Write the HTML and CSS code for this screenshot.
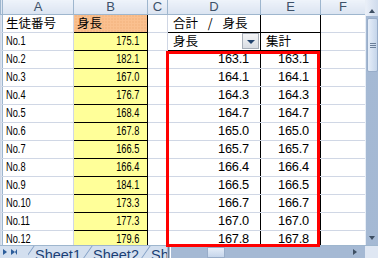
FILE: index.html
```html
<!DOCTYPE html>
<html lang="ja">
  <head>
    <meta charset="UTF-8" />
    <title>Excel pivot</title>
    <link rel="stylesheet" href="styles.css">
  </head>
  <body>
    <div class="window">
      <div class="main">
        <div class="sheet">
          <table class="grid">
            <colgroup>
              <col class="c-stub"><col class="c-a"><col class="c-b"><col class="c-c"><col class="c-d"><col class="c-e"><col class="c-f">
            </colgroup>
            <tr class="colhead">
              <th></th><th>A</th><th>B</th><th>C</th><th>D</th><th>E</th><th>F</th>
            </tr>
            <tr>
              <td class="stub"></td><td class="jp">生徒番号</td><td class="hb jp">身長</td><td></td>
              <td class="jp pv pv-title">合計 / 身長</td><td class="pv pv-title pv-r"></td><td></td>
            </tr>
            <tr>
              <td class="stub"></td><td class="no"><span>No.1</span></td><td class="yb num"><span>175.1</span></td><td></td>
              <td class="jp pv pv-head"><div class="fld">身長<i class="drop"></i></div></td><td class="jp pv pv-head pv-r">集計</td><td></td>
            </tr>
            <tr><td class="stub"></td><td class="no"><span>No.2</span></td><td class="yb num"><span>182.1</span></td><td></td><td class="pv val">163.1</td><td class="pv val pv-r">163.1</td><td></td></tr>
            <tr><td class="stub"></td><td class="no"><span>No.3</span></td><td class="yb num"><span>167.0</span></td><td></td><td class="pv val">164.1</td><td class="pv val pv-r">164.1</td><td></td></tr>
            <tr><td class="stub"></td><td class="no"><span>No.4</span></td><td class="yb num"><span>176.7</span></td><td></td><td class="pv val">164.3</td><td class="pv val pv-r">164.3</td><td></td></tr>
            <tr><td class="stub"></td><td class="no"><span>No.5</span></td><td class="yb num"><span>168.4</span></td><td></td><td class="pv val">164.7</td><td class="pv val pv-r">164.7</td><td></td></tr>
            <tr><td class="stub"></td><td class="no"><span>No.6</span></td><td class="yb num"><span>167.8</span></td><td></td><td class="pv val">165.0</td><td class="pv val pv-r">165.0</td><td></td></tr>
            <tr><td class="stub"></td><td class="no"><span>No.7</span></td><td class="yb num"><span>166.5</span></td><td></td><td class="pv val">165.7</td><td class="pv val pv-r">165.7</td><td></td></tr>
            <tr><td class="stub"></td><td class="no"><span>No.8</span></td><td class="yb num"><span>166.4</span></td><td></td><td class="pv val">166.4</td><td class="pv val pv-r">166.4</td><td></td></tr>
            <tr><td class="stub"></td><td class="no"><span>No.9</span></td><td class="yb num"><span>184.1</span></td><td></td><td class="pv val">166.5</td><td class="pv val pv-r">166.5</td><td></td></tr>
            <tr><td class="stub"></td><td class="no"><span>No.10</span></td><td class="yb num"><span>173.3</span></td><td></td><td class="pv val">166.7</td><td class="pv val pv-r">166.7</td><td></td></tr>
            <tr><td class="stub"></td><td class="no"><span>No.11</span></td><td class="yb num"><span>177.3</span></td><td></td><td class="pv val">167.0</td><td class="pv val pv-r">167.0</td><td></td></tr>
            <tr><td class="stub"></td><td class="no"><span>No.12</span></td><td class="yb num"><span>179.6</span></td><td></td><td class="pv val">167.8</td><td class="pv val pv-r">167.8</td><td></td></tr>
          </table>
        </div>
        <div class="vscroll">
          <div class="arrow up"></div>
          <div class="thumb"><span class="grip"></span></div>
          <div class="track"></div>
          <div class="arrow down"></div>
        </div>
      </div>

      <!-- sheet tabs + horizontal scroll -->
      <div class="tabbar">
        <div class="nav"><i class="tri"></i><i class="tri end"></i></div>
        <div class="tabs">
          <span class="tab">Sheet1</span>
          <span class="tab">Sheet2</span>
          <span class="tab">Sheet3</span>
        </div>
        <div class="hscroll">
          <span class="split"></span>
          <span class="hthumb"></span>
          <span class="htrack"></span>
          <i class="harrow"></i>
        </div>
        <div class="corner"></div>
      </div>

      <!-- red highlight over pivot values -->
      <div class="mark"></div>
    </div>
  </body>
</html>
```

FILE: styles.css
```css
*,
*::after,
*::before {
  padding: 0;
  margin: 0;
  box-sizing: border-box;
}
:root {
  --grid: #d0d7e5;
  --row-h: 18px;
}
html,
body {
  width: 378px;
  height: 258px;
  overflow: hidden;
  background: #fff;
}
.window {
  position: relative;
  width: 378px;
  height: 258px;
  display: flex;
  flex-direction: column;
  overflow: hidden;
  font-family: "Liberation Sans", "Noto Sans CJK JP", sans-serif;
  font-size: 12px;
  color: #000;
}
.main {
  display: flex;
  height: 245px;
  flex: none;
  overflow: hidden;
}
.sheet {
  width: 365px;
  overflow: hidden;
}

/* grid */
.grid {
  border-collapse: collapse;
  table-layout: fixed;
  width: 365px;
}
.c-stub { width: 2px; }
.c-a { width: 71px; }
.c-b { width: 74px; }
.c-c { width: 20px; }
.c-d { width: 93px; }
.c-e { width: 60px; }
.c-f { width: 45px; }

.grid td {
  height: var(--row-h);
  border: 1px solid var(--grid);
  padding: 0 3px;
  white-space: nowrap;
  overflow: hidden;
  line-height: 16px;
}
.grid td.stub {
  padding: 0;
  background: #dde6f2;
  border-right: 1px solid #9eb6ce;
}
.colhead th {
  height: 14px;
  padding: 0;
  font-weight: normal;
  font-size: 13px;
  line-height: 13px;
  color: #3d5169;
  background: linear-gradient(#eef3fa, #dbe4f1);
  border: 1px solid #9eb6ce;
  border-top: 0;
}
.colhead th:first-child {
  background: #dde6f2;
}
.jp {
  font-family: "Noto Sans CJK JP", sans-serif;
  font-size: 12.5px;
  padding-left: 2px;
}
.no span,
.num span {
  display: inline-block;
  font-size: 12.5px;
  transform: scaleX(0.74);
}
.no span {
  transform-origin: left center;
}
.num {
  text-align: right;
}
.num span {
  transform-origin: right center;
  margin-right: 5px;
}

/* column B */
.yb {
  background: #ffff99;
  border: 1px solid #000 !important;
}
.hb {
  background-color: #fac08f;
  background-image: radial-gradient(#e9a46a 0.6px, transparent 0.8px);
  background-size: 3px 3px;
  border: 1px solid #000 !important;
  padding-left: 3px;
}

/* pivot */
.grid td.pv {
  border-left-color: #000;
  border-right-color: #000;
}
.grid td.pv-title {
  border-bottom: 1px solid #000;
  padding-left: 5px;
  word-spacing: 7px;
}
.grid td.pv-head {
  border-bottom: 1px solid #000;
  padding-left: 5px;
}
.fld {
  display: flex;
  align-items: center;
  justify-content: space-between;
}
.drop {
  width: 17px;
  height: 16px;
  margin-right: -2px;
  border: 1px solid #a7aeb8;
  background: linear-gradient(#f4f5f7, #d9dde3);
  position: relative;
}
.drop::after {
  content: "";
  position: absolute;
  left: 4px;
  top: 6px;
  border-left: 4px solid transparent;
  border-right: 4px solid transparent;
  border-top: 4px solid #23446e;
}
.val {
  text-align: right;
  padding-right: 11px !important;
  font-size: 12.8px;
  letter-spacing: -0.2px;
}

/* vertical scrollbar */
.vscroll {
  width: 13px;
  display: flex;
  flex-direction: column;
  background-color: #b9c9df;
  background-image: radial-gradient(#8ea6c6 0.6px, transparent 0.8px);
  background-size: 2px 2px;
  border-left: 1px solid #e8eef6;
}
.arrow {
  height: 16px;
  position: relative;
}
.arrow.up {
  background: linear-gradient(90deg, #e9eff8, #cfdbec);
}
.arrow::after {
  content: "";
  position: absolute;
  left: 3px;
  border-left: 3px solid transparent;
  border-right: 3px solid transparent;
}
.arrow.up::after {
  top: 9px;
  border-bottom: 4px solid #3e4f63;
}
.arrow.down {
  height: 13px;
}
.arrow.down::after {
  top: 4px;
  border-top: 4px solid #3e4f63;
}
.thumb {
  height: 54px;
  margin: 2px 0 0 1px;
  background: linear-gradient(90deg, #e6eef9, #c5d5ea);
  border: 1px solid #98adc9;
  border-radius: 2px;
  display: flex;
  align-items: center;
  justify-content: center;
}
.grip {
  width: 6px;
  height: 5px;
  border-top: 1px solid #6b7f99;
  border-bottom: 1px solid #6b7f99;
  position: relative;
}
.grip::after {
  content: "";
  position: absolute;
  left: 0;
  right: 0;
  top: 1px;
  border-top: 1px solid #6b7f99;
}
.track {
  flex: 1;
}

/* tab bar */
.tabbar {
  height: 13px;
  flex: none;
  display: flex;
  align-items: stretch;
  background: #d3dfef;
  border-top: 1px solid #9eb6ce;
}
.nav {
  width: 28px;
  display: flex;
  align-items: center;
  gap: 4px;
  padding-left: 3px;
}
.tri {
  width: 0;
  height: 0;
  border-top: 3px solid transparent;
  border-bottom: 3px solid transparent;
  border-left: 4px solid #2c5d9b;
}
.tri.end {
  border-right: 2px solid #2c5d9b;
  width: 6px;
}
.tabs {
  width: 139px;
  display: flex;
  overflow: hidden;
  font-size: 14.5px;
  line-height: 16px;
  color: #1b3f75;
}
.tab {
  flex: none;
  width: 58px;
  padding: 1px 0 0 7px;
  position: relative;
}
.tab::before {
  content: "";
  position: absolute;
  left: 0;
  top: 0;
  height: 16px;
  border-left: 1px solid #7f9dc4;
  transform: skewX(-35deg);
}
.hscroll {
  flex: 1;
  display: flex;
  align-items: center;
  background-color: #b9c9df;
  background-image: radial-gradient(#8ea6c6 0.6px, transparent 0.8px);
  background-size: 2px 2px;
}
.split {
  width: 3px;
  height: 11px;
  margin-left: 1px;
  border-left: 1px solid #6b7f99;
  border-right: 1px solid #fff;
}
.hthumb {
  width: 18px;
  height: 11px;
  margin-left: 36px;
  background: linear-gradient(#e6eef9, #c5d5ea);
  border: 1px solid #98adc9;
}
.htrack {
  flex: 1;
}
.harrow {
  width: 0;
  height: 0;
  margin-right: 8px;
  border-top: 3px solid transparent;
  border-bottom: 3px solid transparent;
  border-left: 4px solid #3e4f63;
}
.corner {
  width: 13px;
  background: #dfe7f3;
}

/* red frame */
.mark {
  position: absolute;
  left: 166px;
  top: 51px;
  width: 154px;
  height: 196px;
  border: 3px solid #ff0000;
  pointer-events: none;
}
```
